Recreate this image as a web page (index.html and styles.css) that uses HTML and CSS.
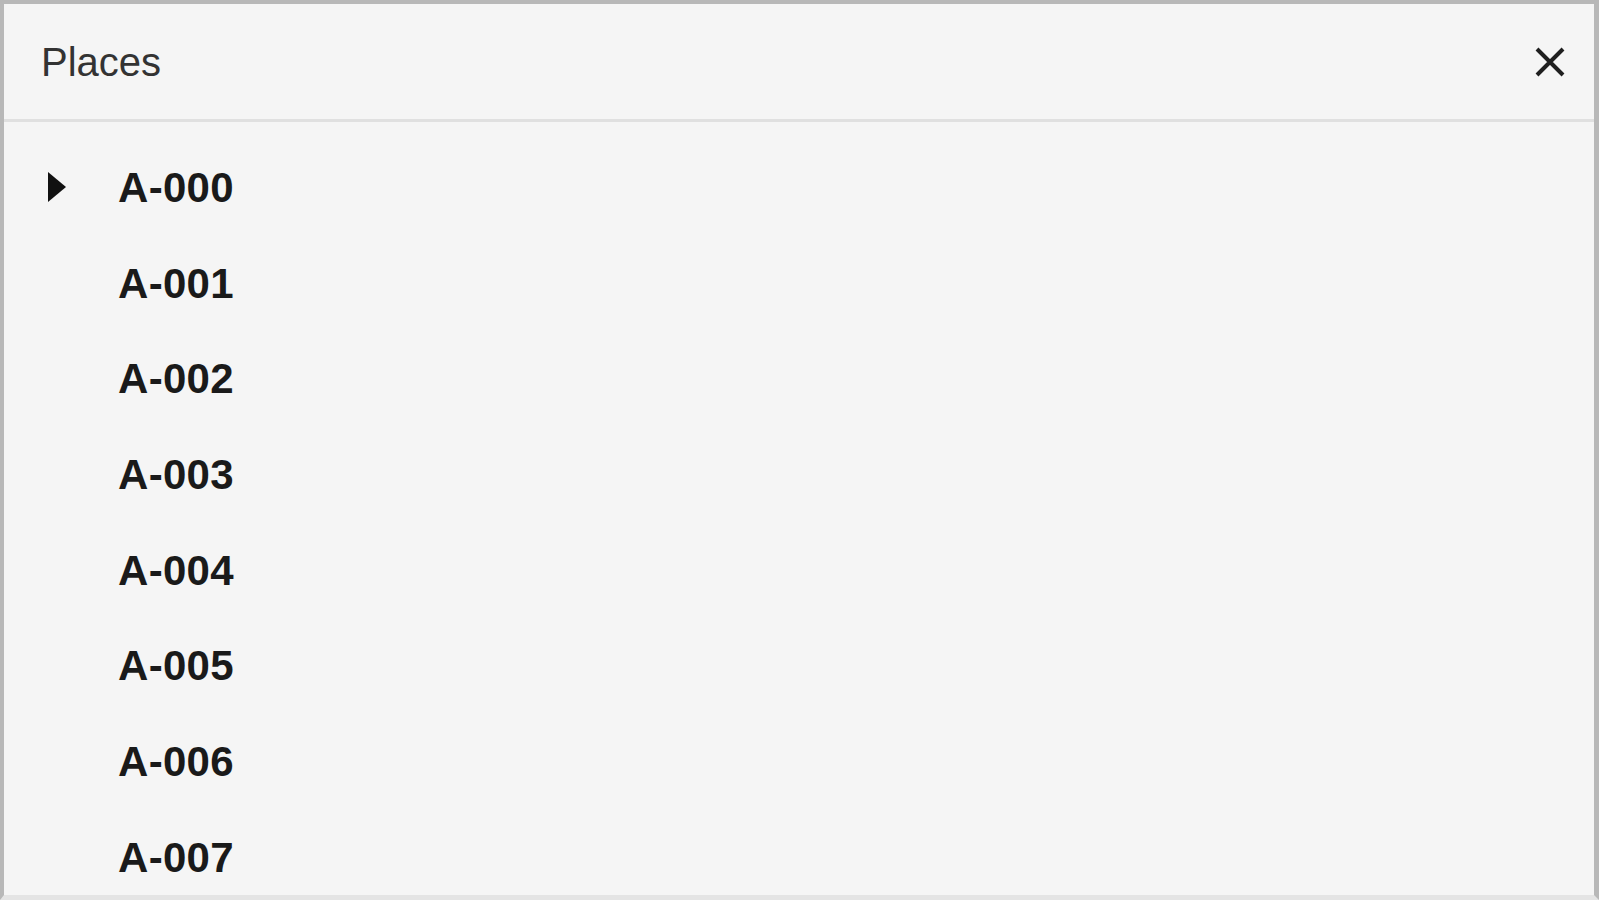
FILE: index.html
```html
<!DOCTYPE html>
<html lang="en">
<head>
<meta charset="utf-8">
<title>Places</title>
<link rel="stylesheet" href="styles.css">
</head>
<body>
<div class="panel">
  <header class="head">
    <h1 class="title">Places</h1>
    <button class="close" aria-label="Close">
      <svg viewBox="0 0 32 32" width="32" height="32"><path d="M3 3 L29 29 M29 3 L3 29" stroke="#1f1f1f" stroke-width="4" stroke-linecap="butt" fill="none"/></svg>
    </button>
  </header>
  <ul class="list">
    <li class="row"><span class="caret"><svg viewBox="0 0 20 32" width="20" height="32"><path d="M1 1 L19 16 L1 31 Z" fill="#111"/></svg></span><span class="label">A-000</span></li>
    <li class="row"><span class="caret"></span><span class="label">A-001</span></li>
    <li class="row"><span class="caret"></span><span class="label">A-002</span></li>
    <li class="row"><span class="caret"></span><span class="label">A-003</span></li>
    <li class="row"><span class="caret"></span><span class="label">A-004</span></li>
    <li class="row"><span class="caret"></span><span class="label">A-005</span></li>
    <li class="row"><span class="caret"></span><span class="label">A-006</span></li>
    <li class="row"><span class="caret"></span><span class="label">A-007</span></li>
  </ul>
</div>
</body>
</html>
```
FILE: styles.css
```css
html, body {
  margin: 0;
  padding: 0;
  height: 900px;
  overflow: hidden;
  background: #f5f5f5;
}

.panel {
  box-sizing: border-box;
  height: 900px;
  background: #f5f5f5;
  border-top: 4px solid #b8b8b8;
  border-left: 4px solid #b8b8b8;
  border-right: 5px solid #b8b8b8;
  border-bottom: 5px solid #e4e4e4;
  font-family: "Liberation Sans", Arial, sans-serif;
  overflow: hidden;
}

.head {
  box-sizing: border-box;
  height: 118px;
  display: flex;
  align-items: center;
  justify-content: space-between;
  padding: 0 24px 0 37px;
  border-bottom: 3px solid #e0e0e0;
}

.title {
  margin: 0;
  font-size: 40px;
  font-weight: 400;
  line-height: 1;
  color: #333;
}

.close {
  width: 40px;
  height: 40px;
  padding: 0;
  border: 0;
  background: none;
  display: flex;
  align-items: center;
  justify-content: center;
}

.list {
  list-style: none;
  margin: 0;
  padding: 18px 0 0 0;
}

.row {
  height: 95.7px;
  display: flex;
  align-items: center;
  padding-left: 43px;
}

.caret {
  width: 20px;
  height: 32px;
  margin-right: 51px;
  margin-top: -2px;
  display: flex;
}

.label {
  font-size: 42px;
  font-weight: 700;
  line-height: 1;
  color: #1a1a1a;
  letter-spacing: 0.3px;
}
```
